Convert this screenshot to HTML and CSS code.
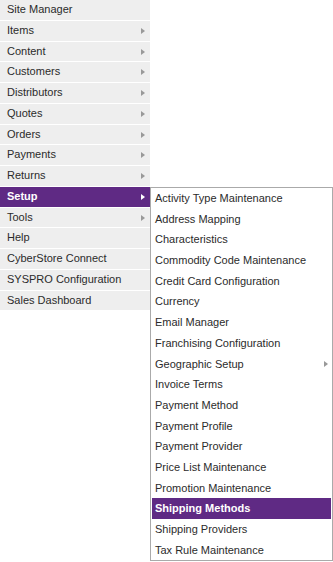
FILE: index.html
```html
<!DOCTYPE html>
<html lang="en">
<head>
  <meta charset="UTF-8" />
  <title>Admin Menu</title>
  <link rel="stylesheet" href="styles.css">
</head>
<body>

  <div class="nav">
    <!-- Main admin menu -->
    <ul class="menu">
      <li class="menu-item">Site Manager</li>
      <li class="menu-item has-sub">Items</li>
      <li class="menu-item has-sub">Content</li>
      <li class="menu-item has-sub">Customers</li>
      <li class="menu-item has-sub">Distributors</li>
      <li class="menu-item has-sub">Quotes</li>
      <li class="menu-item has-sub">Orders</li>
      <li class="menu-item has-sub">Payments</li>
      <li class="menu-item has-sub">Returns</li>
      <li class="menu-item has-sub active">Setup</li>
      <li class="menu-item has-sub">Tools</li>
      <li class="menu-item">Help</li>
      <li class="menu-item">CyberStore Connect</li>
      <li class="menu-item">SYSPRO Configuration</li>
      <li class="menu-item">Sales Dashboard</li>
    </ul>

    <!-- Setup flyout -->
    <ul class="submenu">
      <li class="sub-item">Activity Type Maintenance</li>
      <li class="sub-item">Address Mapping</li>
      <li class="sub-item">Characteristics</li>
      <li class="sub-item">Commodity Code Maintenance</li>
      <li class="sub-item">Credit Card Configuration</li>
      <li class="sub-item">Currency</li>
      <li class="sub-item">Email Manager</li>
      <li class="sub-item">Franchising Configuration</li>
      <li class="sub-item has-sub">Geographic Setup</li>
      <li class="sub-item">Invoice Terms</li>
      <li class="sub-item">Payment Method</li>
      <li class="sub-item">Payment Profile</li>
      <li class="sub-item">Payment Provider</li>
      <li class="sub-item">Price List Maintenance</li>
      <li class="sub-item">Promotion Maintenance</li>
      <li class="sub-item active">Shipping Methods</li>
      <li class="sub-item">Shipping Providers</li>
      <li class="sub-item">Tax Rule Maintenance</li>
    </ul>
  </div>

</body>
</html>
```

FILE: styles.css
```css
/* Basic reset */
* {
  margin: 0;
  padding: 0;
  box-sizing: border-box;
}

body {
  font-family: Arial, "Liberation Sans", sans-serif;
  font-size: 11px;
  color: #2b2b2b;
  background-color: #fff;
}

ul {
  list-style: none;
}

.nav {
  display: flex;
  align-items: flex-start;
}

/* Main menu */
.menu {
  width: 150px;
  flex-shrink: 0;
}

.menu-item {
  position: relative;
  height: 20.75px;
  line-height: 19.75px;
  padding: 0 7px;
  background-color: #eee;
  border-bottom: 1px solid #fff;
  white-space: nowrap;
}

/* Little arrow for items with children */
.has-sub::after {
  content: "";
  position: absolute;
  right: 5px;
  top: 7px;
  border-left: 4px solid #999;
  border-top: 3px solid transparent;
  border-bottom: 3px solid transparent;
}

.menu-item.active {
  background-color: #5f2a84;
  color: #fff;
  font-weight: bold;
}
.menu-item.active::after {
  border-left-color: #fff;
}

/* Setup flyout, lined up with the Setup row */
.submenu {
  width: 183px;
  margin-top: 187px;
  padding: 0 1px;
  background-color: #fff;
  border: 1px solid #aaa;
}

.sub-item {
  position: relative;
  height: 20.7px;
  line-height: 20.7px;
  padding: 0 3px;
  white-space: nowrap;
}
.sub-item.has-sub::after {
  right: 3px;
}

.sub-item.active {
  background-color: #5f2a84;
  color: #fff;
  font-weight: bold;
}
```
